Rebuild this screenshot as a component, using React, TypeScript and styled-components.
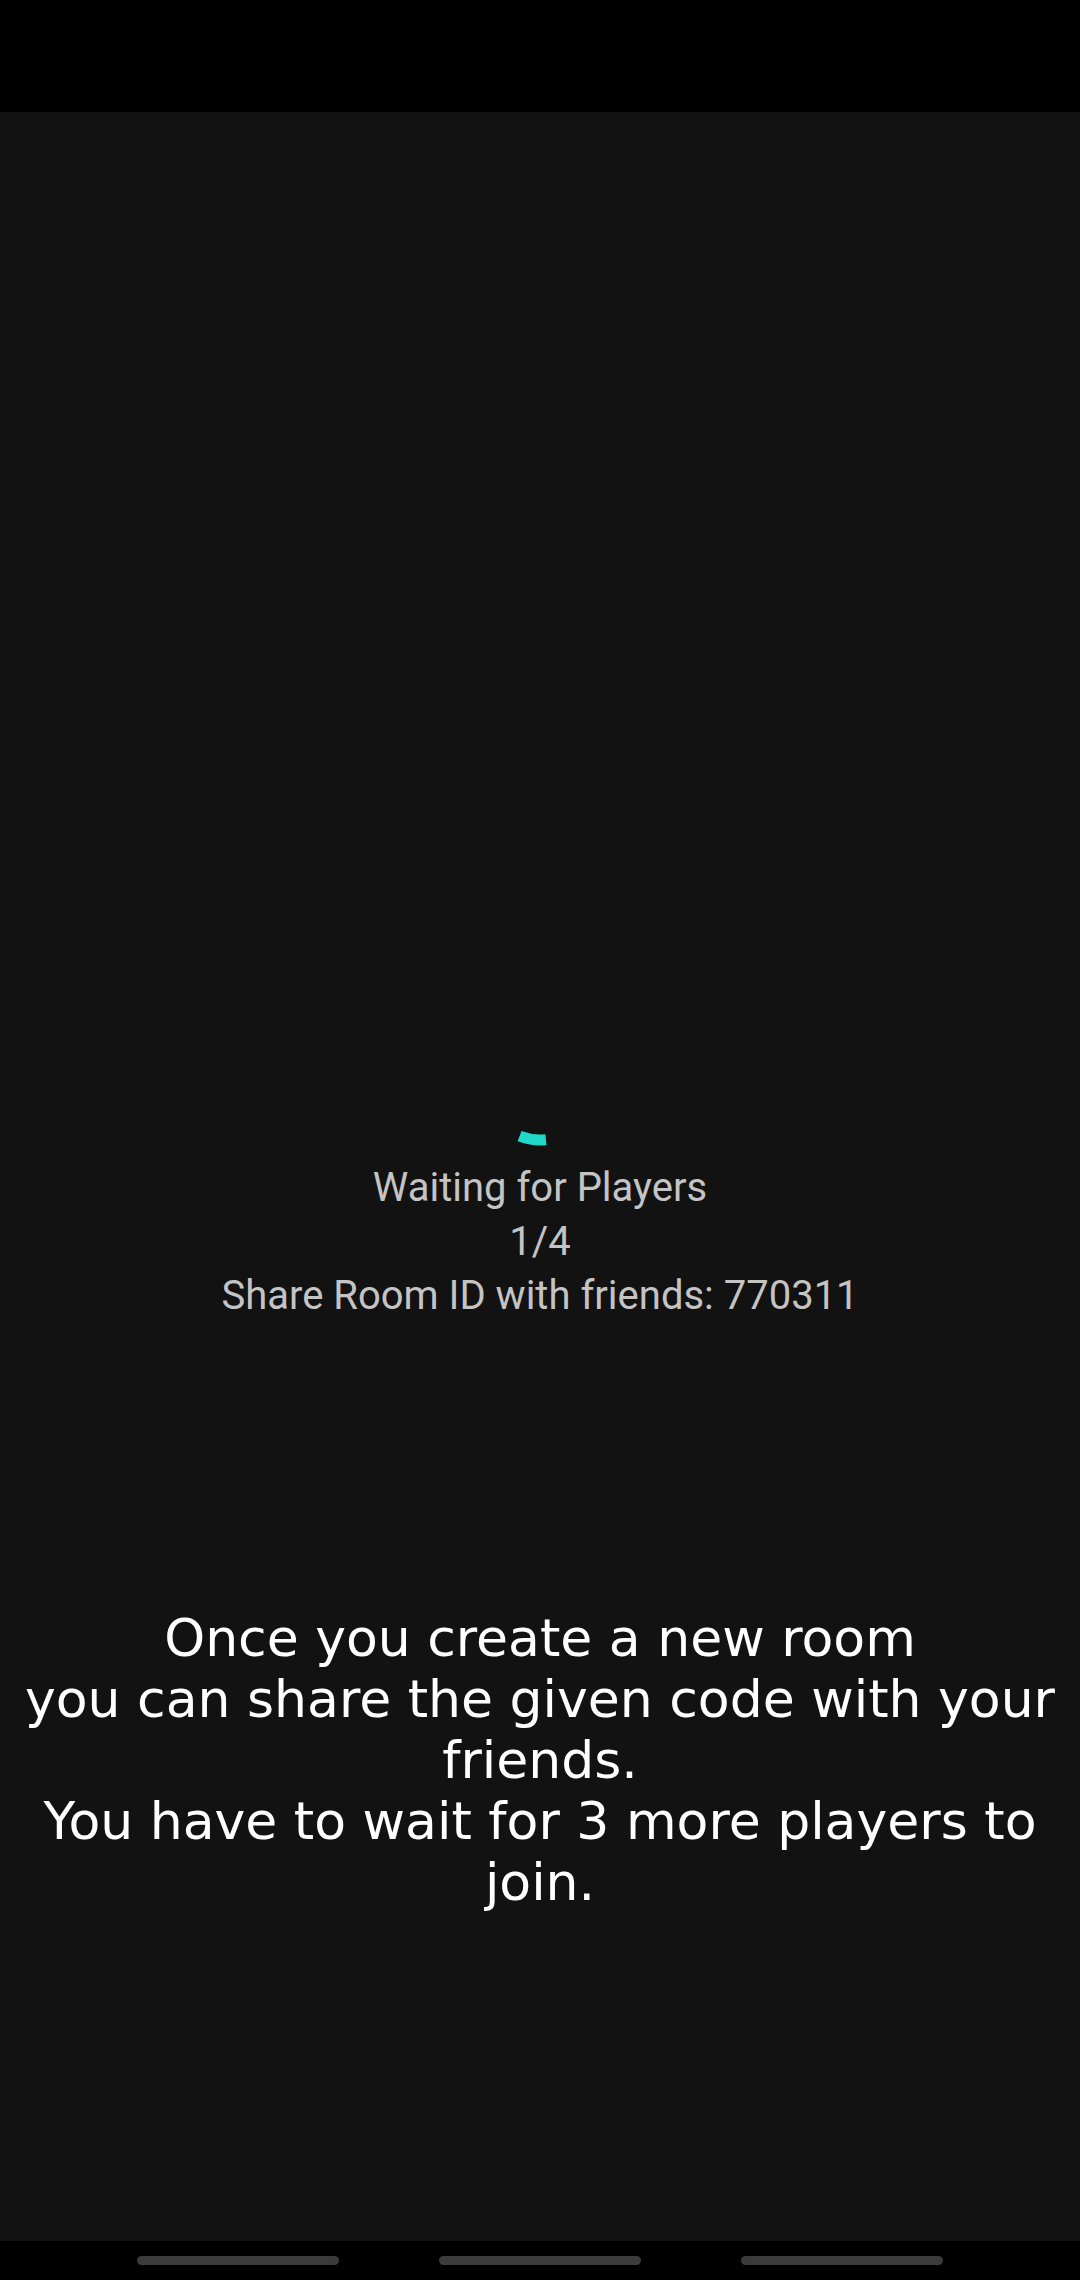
import React from "react";
import styled, { createGlobalStyle } from "styled-components";

const Global = createGlobalStyle`
  html, body { margin: 0; padding: 0; background: #121212; }
  #root { width: 1080px; height: 2280px; }
`;

const Screen = styled.div`
  width: 1080px;
  height: 2280px;
  display: flex;
  flex-direction: column;
  background: #121212;
  overflow: hidden;
`;

const StatusBar = styled.div`
  height: 112px;
  flex: none;
  background: #000;
`;

const Main = styled.main`
  flex: 1;
  display: flex;
  flex-direction: column;
  align-items: center;
  padding-top: 901px;
  box-sizing: border-box;
`;

const Spinner = styled.svg`
  width: 140px;
  height: 140px;
  display: block;
`;

const Status = styled.div`
  display: flex;
  flex-direction: column;
  align-items: center;
  margin-top: 8px;
  font-family: Roboto, "Noto Sans", sans-serif;
  font-size: 40px;
  line-height: 54px;
  color: #c4c4c4;
  text-align: center;
`;

const StatusLine = styled.div``;

const Info = styled.p`
  margin: 285px 0 0;
  width: 100%;
  font-family: "DejaVu Sans", sans-serif;
  font-size: 52px;
  line-height: 61px;
  color: #ffffff;
  text-align: center;
`;

const NavBar = styled.div`
  height: 39px;
  flex: none;
  background: #000;
  display: flex;
  justify-content: center;
  align-items: flex-start;
  gap: 100px;
  padding-top: 15px;
  box-sizing: border-box;
`;

const Pill = styled.div`
  width: 202px;
  height: 9px;
  border-radius: 5px;
  background: #3b3b3b;
`;

function arcPath(cx: number, cy: number, r: number, a0: number, a1: number) {
  const rad = (a: number) => (a * Math.PI) / 180;
  const x0 = cx + r * Math.cos(rad(a0));
  const y0 = cy + r * Math.sin(rad(a0));
  const x1 = cx + r * Math.cos(rad(a1));
  const y1 = cy + r * Math.sin(rad(a1));
  return `M ${x0} ${y0} A ${r} ${r} 0 0 1 ${x1} ${y1}`;
}

export default function App() {
  return (
    <>
      <Global />
      <Screen>
        <StatusBar />
        <Main>
          <Spinner viewBox="0 0 140 140">
            <path
              d={arcPath(70, 70, 57, 84, 111)}
              fill="none"
              stroke="#1fd8c6"
              strokeWidth={11}
            />
          </Spinner>
          <Status>
            <StatusLine>Waiting for Players</StatusLine>
            <StatusLine>1/4</StatusLine>
            <StatusLine>Share Room ID with friends: 770311</StatusLine>
          </Status>
          <Info>
            Once you create a new room
            <br />
            you can share the given code with your
            <br />
            friends.
            <br />
            You have to wait for 3 more players to
            <br />
            join.
          </Info>
        </Main>
        <NavBar>
          <Pill />
          <Pill />
          <Pill />
        </NavBar>
      </Screen>
    </>
  );
}
